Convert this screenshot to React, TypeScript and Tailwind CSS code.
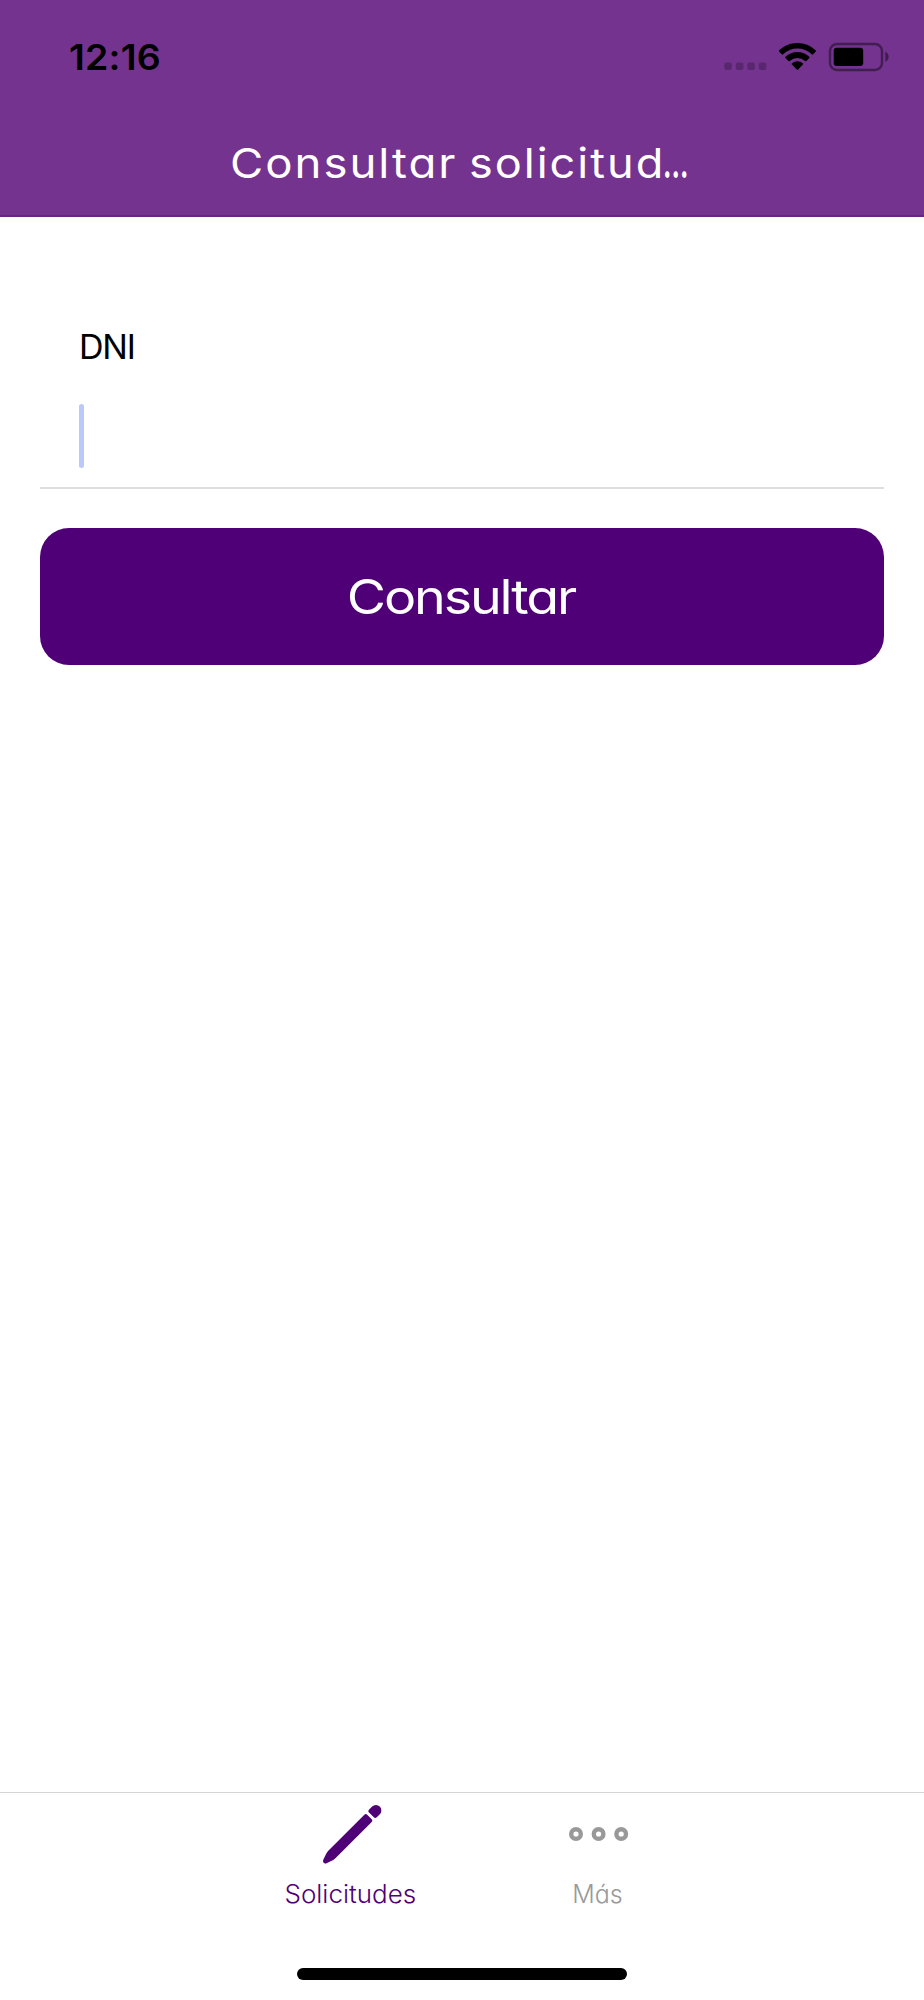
import React from 'react';

function StatusBar() {
  return (
    <div className="flex h-[113px] items-start justify-between pl-[69px] pr-[35px] pt-[38px] text-black">
      <span className="mt-[-1px] origin-left scale-x-[1.04] font-['Inter',sans-serif] text-[36px] font-semibold leading-[40px] tracking-[0.2px]">12:16</span>
      <svg width="166" height="30" viewBox="723 42 166 30" className="mt-[4px]" aria-hidden="true">
        <g opacity=".22">
          <rect x="724.3" y="62.5" width="7.6" height="7.6" rx="2" />
          <rect x="735.8" y="62.5" width="7.6" height="7.6" rx="2" />
          <rect x="747.3" y="62.5" width="7.6" height="7.6" rx="2" />
          <rect x="758.8" y="62.5" width="7.6" height="7.6" rx="2" />
        </g>
        <path d="M797.4 43C790.4 43 784 45.8 779.2 50.3q-.7.7 0 1.4l2.5 2.6q.7.7 1.4 0a20.8 20.8 0 0 1 28.6 0q.7.7 1.4 0l2.5-2.6q.7-.7 0-1.4A26.6 26.6 0 0 0 797.4 43Z" />
        <path d="M797.4 52a17.5 17.5 0 0 0-11.9 4.7q-.7.7 0 1.4l2.9 2.9q.7.6 1.4 0a11.2 11.2 0 0 1 15.2 0q.7.6 1.4 0l2.9-2.9q.7-.7 0-1.4A17.5 17.5 0 0 0 797.4 52Z" />
        <path d="M797.4 61.2a8.6 8.6 0 0 0-5.5 2q-.7.7 0 1.4l4.8 4.9q.7.7 1.4 0l4.8-4.9q.7-.7 0-1.4A8.6 8.6 0 0 0 797.4 61.2Z" />
        <rect x="830" y="44" width="52" height="26" rx="7" fill="none" stroke="black" strokeWidth="2.4" opacity=".43" />
        <rect x="833.7" y="47.7" width="29.5" height="18.4" rx="3" />
        <path d="M885.3 51.8q3.3 1.3 3.3 5t-3.3 5Z" opacity=".45" />
      </svg>
    </div>
  );
}

function Header() {
  return (
    <header className="h-[217px] shrink-0 border-b-2 border-[#672584] bg-[#73338f]">
      <StatusBar />
      <h1 className="flex h-[100px] items-start pl-[230px] pt-[25px] text-[41px] font-normal leading-[50px] text-white">
        <span className="w-[239px] shrink-0 origin-left scale-x-[1.11] whitespace-pre tracking-[1.8px]">Consultar</span>
        <span className="w-[194px] shrink-0 origin-left scale-x-[1.1] whitespace-pre tracking-[1.8px]">solicitud</span>
        <span className="origin-left scale-x-[0.62] font-bold tracking-normal">…</span>
      </h1>
    </header>
  );
}

function RequestForm() {
  return (
    <main className="flex flex-1 flex-col px-[40px] pt-[106px]">
      <div className="flex h-[166px] flex-col border-b-2 border-[#dedede] pl-[39px]">
        <label htmlFor="dni" className="pt-[3px] text-[34px] leading-[42px] tracking-[-1.2px] text-black">DNI</label>
        <div className="mt-[36px] h-[64px] w-[5px] rounded-full bg-[#bac8fa]" />
      </div>
      <button className="mt-[39px] flex h-[137px] shrink-0 items-center justify-center rounded-[29px] bg-[#4f0076] text-[48px] leading-[56px] tracking-[-1.9px] text-white">
        <span className="mr-[2px] scale-x-[1.12]">Consultar</span>
      </button>
    </main>
  );
}

function TabBar() {
  return (
    <nav className="flex h-[208px] shrink-0 flex-col items-center border-t border-[#d5d5d5]">
      <div className="flex h-[175px] w-full pl-[227px] text-[25px] font-light leading-[30px]">
        <div className="flex w-[247px] flex-col items-center text-[#4f0076]">
          <svg width="62" height="62" viewBox="0 0 62 62" className="mt-[10px]" aria-hidden="true">
            <g fill="currentColor" transform="translate(4.2 59.2) rotate(-45)">
              <path d="M1.5-2.5 8-4.8Q9.500-5.200 11-5.200H62Q64-5.200 64-3.200V3.200Q64 5.200 62 5.200H11Q9.500 5.200 8 4.800L1.500 2.500Q-.8 1.800-.8 0T1.500-2.500Z" />
              <path d="M69-5.400h4.200a5.400 5.400 0 0 1 0 10.800H69q-2.200 0-2.200-2v-6.800q0-2 2.200-2Z" />
            </g>
          </svg>
          <span className="mt-[14px] scale-x-[1.04] whitespace-nowrap">Solicitudes</span>
        </div>
        <div className="flex w-[247px] flex-col items-center text-[#999999]">
          <svg width="62" height="62" viewBox="0 0 62 62" className="mt-[10px]" aria-hidden="true">
            <g fill="none" stroke="currentColor" strokeWidth="4.4">
              <circle cx="9" cy="31" r="4.8" />
              <circle cx="31.6" cy="31" r="4.8" />
              <circle cx="54.2" cy="31" r="4.8" />
            </g>
          </svg>
          <span className="mt-[14px]">Más</span>
        </div>
      </div>
      <div className="h-[12px] w-[330px] rounded-full bg-black" />
    </nav>
  );
}

export default function App() {
  return (
    <div className="flex h-[2000px] w-full flex-col overflow-hidden bg-white font-['Inter',sans-serif] [font-feature-settings:'cv11']">
      <Header />
      <RequestForm />
      <TabBar />
    </div>
  );
}
